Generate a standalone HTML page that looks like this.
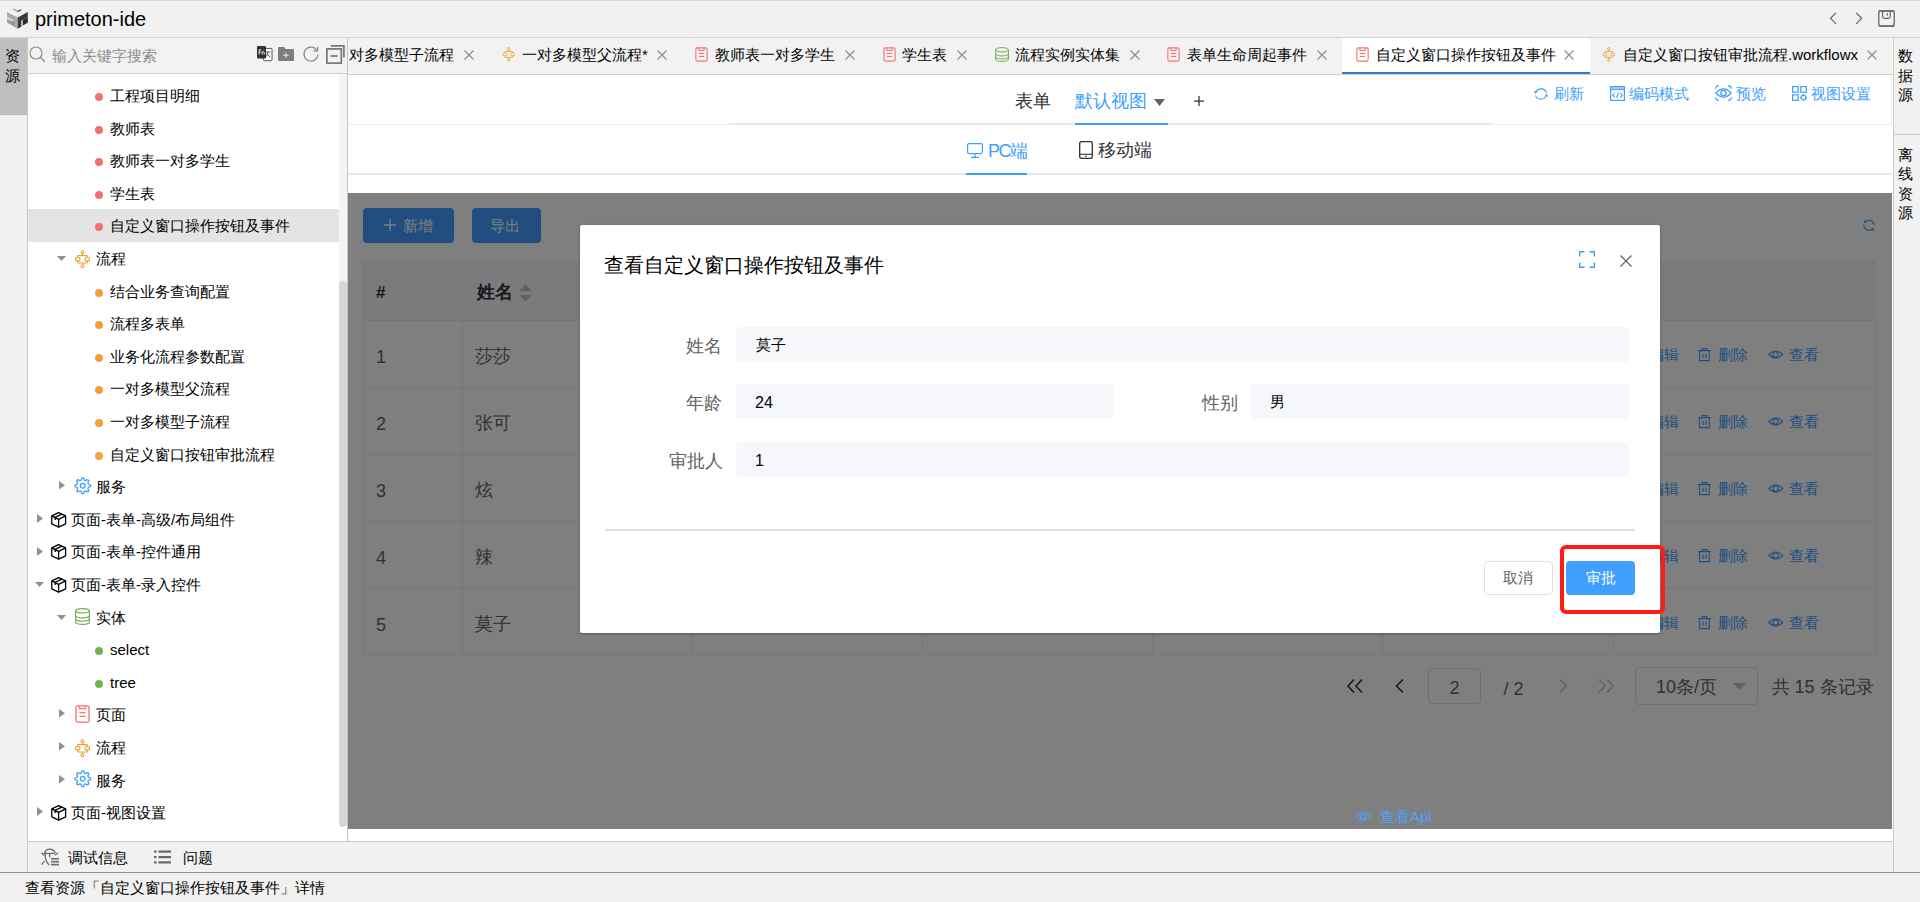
<!DOCTYPE html>
<html><head><meta charset="utf-8">
<style>
*{margin:0;padding:0;box-sizing:border-box}
html,body{width:1920px;height:902px;overflow:hidden;background:#f1f1f1;font-family:"Liberation Sans",sans-serif;color:#000}
.a{position:absolute}
.t{position:absolute;white-space:nowrap;line-height:1}
svg{position:absolute;overflow:visible}
</style></head><body>
<div class="a" style="left:0px;top:0px;width:1920px;height:1px;background:#d8dadc;"></div>
<div class="a" style="left:0px;top:37px;width:1920px;height:1px;background:#d2d2d2;"></div>
<svg style="left:0px;top:0px;" width="32" height="32" viewBox="0 0 32 32"><polygon points="7,12 17.7,17.4 17.7,28.8 13.6,26.5 13.6,20.2 7,17" fill="#a9a9a9"/><polygon points="7,18.6 12.5,21.3 12.5,25.5 7,22.8" fill="#a0a0a0"/><polygon points="12.5,21.3 13.6,20.8 13.6,26 12.5,25.5" fill="#555"/><polygon points="17.7,17.4 27.8,12 27.8,17.5 21.5,20.7 21.5,26.5 17.7,28.8" fill="#3a3a3a"/><polygon points="22.8,20 27.8,17.5 27.8,22.8 22.8,25.4" fill="#2a2a2a"/><polygon points="21.5,20.7 22.8,20 22.8,25.4 21.5,26.2" fill="#bbb"/><polygon points="13.3,8 17.7,10.5 17.7,12.4 13.3,9.9" fill="#b0b0b0"/><polygon points="17.7,10.5 21.4,9 21.4,10.2 17.7,12.4" fill="#555"/></svg>
<div class="t" style="left:35px;top:9px;font-size:20px;color:#000;">primeton-ide</div>
<svg style="left:1829px;top:12px;" width="9" height="13" viewBox="0 0 9 13"><path d="M7 0.8 L1.5 6.3 L7 11.8" fill="none" stroke="#5a5a5a" stroke-width="1.1"/></svg>
<svg style="left:1855px;top:12px;" width="9" height="13" viewBox="0 0 9 13"><path d="M1.2 0.8 L6.7 6.3 L1.2 11.8" fill="none" stroke="#5a5a5a" stroke-width="1.1"/></svg>
<svg style="left:1878px;top:10px;" width="17" height="17" viewBox="0 0 17 17"><rect x="0.8" y="0.8" width="15.4" height="15.4" rx="2.2" fill="none" stroke="#666" stroke-width="1.3"/><rect x="0.6" y="0.3" width="15.8" height="1.4" fill="#666"/><rect x="0.6" y="15.3" width="15.8" height="1.4" fill="#666"/><path d="M4.6 1 V6.6 Q4.6 8.4 6.4 8.4 H10.4 Q12.2 8.4 12.2 6.6 V1" fill="none" stroke="#666" stroke-width="1.2"/><line x1="9.3" y1="3" x2="9.3" y2="5.6" stroke="#555" stroke-width="1"/></svg>
<div class="a" style="left:0px;top:38px;width:27px;height:77px;background:#bfbfbf;"></div>
<div class="a" style="left:0px;top:114px;width:27px;height:1px;background:#b9b9b9;"></div>
<div class="a" style="left:27px;top:38px;width:1px;height:834px;background:#c8c8c8;"></div>
<div class="t" style="left:5px;top:48px;font-size:15px;color:#000;">资</div>
<div class="t" style="left:5px;top:68px;font-size:15px;color:#000;">源</div>
<div class="a" style="left:28px;top:38px;width:319px;height:35px;background:#f2f2f2;"></div>
<div class="a" style="left:28px;top:73px;width:319px;height:1px;background:#d0d0d0;"></div>
<svg style="left:29px;top:46px;" width="17" height="17" viewBox="0 0 17 17"><circle cx="7" cy="7" r="6" fill="none" stroke="#8c8c8c" stroke-width="1.2"/><line x1="11.3" y1="11.3" x2="15.8" y2="15.8" stroke="#8c8c8c" stroke-width="1.3"/></svg>
<div class="t" style="left:52px;top:48px;font-size:15px;color:#8c8c8c;">输入关键字搜索</div>
<svg style="left:257px;top:46px;" width="16" height="16" viewBox="0 0 16 16"><rect x="6.6" y="2.4" width="8.4" height="12.3" rx="0.8" fill="#fff" stroke="#555" stroke-width="1"/><path d="M8.8 6 H13.4 M11 6 L9.5 10.5 M10.6 7.8 L13 11.2" stroke="#444" stroke-width="0.9" fill="none"/><rect x="0" y="0" width="9" height="12.5" rx="1.2" fill="#333"/><path d="M2.2 8.5 V3.8 H4.2 M2.2 6 H3.8 M5.2 8.5 V5.5 M5.2 6.2 Q6.8 4.8 7.2 6.4 V8.5" stroke="#eee" stroke-width="1" fill="none"/></svg>
<svg style="left:278px;top:47px;" width="16" height="14" viewBox="0 0 16 14"><path d="M0 1.2 Q0 0 1.2 0 H6 L7.6 2 H14.8 Q16 2 16 3.2 V12.8 Q16 14 14.8 14 H1.2 Q0 14 0 12.8 Z" fill="#7d7d7d"/><path d="M8 5.5 V11 M5.2 8.2 H10.8" stroke="#e8e8e8" stroke-width="1.1"/></svg>
<svg style="left:303px;top:46px;" width="16" height="16" viewBox="0 0 16 16"><path d="M14.2 4.8 A7 7 0 1 0 15 8.5" fill="none" stroke="#8a8a8a" stroke-width="1.2"/><path d="M10.5 4.8 H14.6 V0.8" fill="none" stroke="#8a8a8a" stroke-width="1.2"/></svg>
<svg style="left:326px;top:45px;" width="19" height="19" viewBox="0 0 19 19"><rect x="0.9" y="3.9" width="14.4" height="14.2" fill="none" stroke="#777" stroke-width="1.7"/><path d="M4.8 0.9 H17.9 V12.5" fill="none" stroke="#777" stroke-width="1.7"/><line x1="4.5" y1="11" x2="11.6" y2="11" stroke="#777" stroke-width="1.7"/></svg>
<div class="a" style="left:28px;top:74px;width:319px;height:767px;background:#fff;"></div>
<div class="a" style="left:339px;top:74px;width:8px;height:212px;background:#f4f4f4;"></div>
<div class="a" style="left:339px;top:281px;width:8px;height:546px;background:#d6d6d6;border-radius:4px"></div>
<div class="a" style="left:28px;top:209px;width:311px;height:33px;background:#e4e4e4;"></div>
<div class="a" style="left:347px;top:38px;width:1px;height:803px;background:#c4c4c4;"></div>
<div class="a" style="left:95px;top:93.0px;width:8px;height:8px;background:#f46f6f;border-radius:50%"></div>
<div class="t" style="left:110px;top:88.0px;font-size:15px;color:#000;">工程项目明细</div>
<div class="a" style="left:95px;top:125.6px;width:8px;height:8px;background:#f46f6f;border-radius:50%"></div>
<div class="t" style="left:110px;top:120.6px;font-size:15px;color:#000;">教师表</div>
<div class="a" style="left:95px;top:158.2px;width:8px;height:8px;background:#f46f6f;border-radius:50%"></div>
<div class="t" style="left:110px;top:153.2px;font-size:15px;color:#000;">教师表一对多学生</div>
<div class="a" style="left:95px;top:190.8px;width:8px;height:8px;background:#f46f6f;border-radius:50%"></div>
<div class="t" style="left:110px;top:185.8px;font-size:15px;color:#000;">学生表</div>
<div class="a" style="left:95px;top:223.4px;width:8px;height:8px;background:#f46f6f;border-radius:50%"></div>
<div class="t" style="left:110px;top:218.4px;font-size:15px;color:#000;">自定义窗口操作按钮及事件</div>
<svg style="left:57px;top:256.0px;" width="9" height="5" viewBox="0 0 9 5"><polygon points="0,0 9,0 4.5,5" fill="#909090"/></svg>
<svg style="left:74px;top:249.5px" width="17.0" height="19.0" viewBox="0 0 17 19"><g fill="none" stroke="#e8a035" stroke-width="1.1"><ellipse cx="8.5" cy="2.2" rx="1.5" ry="1.5"/><line x1="8.5" y1="3.7" x2="8.5" y2="5.6"/><rect x="3.6" y="5.6" width="9.8" height="7.4" rx="0.8"/><line x1="8.5" y1="13" x2="8.5" y2="14.7"/><ellipse cx="8.5" cy="16.2" rx="1.5" ry="1.5"/></g><rect x="1.5" y="7.7" width="4.4" height="3.2" rx="0.6" fill="#fff" stroke="#e8a035" stroke-width="1.1"/><rect x="11.1" y="7.7" width="4.4" height="3.2" rx="0.6" fill="#fff" stroke="#e8a035" stroke-width="1.1"/></svg>
<div class="t" style="left:96px;top:251.0px;font-size:15px;color:#000;">流程</div>
<div class="a" style="left:95px;top:288.6px;width:8px;height:8px;background:#f0a03c;border-radius:50%"></div>
<div class="t" style="left:110px;top:283.6px;font-size:15px;color:#000;">结合业务查询配置</div>
<div class="a" style="left:95px;top:321.2px;width:8px;height:8px;background:#f0a03c;border-radius:50%"></div>
<div class="t" style="left:110px;top:316.2px;font-size:15px;color:#000;">流程多表单</div>
<div class="a" style="left:95px;top:353.8px;width:8px;height:8px;background:#f0a03c;border-radius:50%"></div>
<div class="t" style="left:110px;top:348.8px;font-size:15px;color:#000;">业务化流程参数配置</div>
<div class="a" style="left:95px;top:386.4px;width:8px;height:8px;background:#f0a03c;border-radius:50%"></div>
<div class="t" style="left:110px;top:381.4px;font-size:15px;color:#000;">一对多模型父流程</div>
<div class="a" style="left:95px;top:419.0px;width:8px;height:8px;background:#f0a03c;border-radius:50%"></div>
<div class="t" style="left:110px;top:414.0px;font-size:15px;color:#000;">一对多模型子流程</div>
<div class="a" style="left:95px;top:451.6px;width:8px;height:8px;background:#f0a03c;border-radius:50%"></div>
<div class="t" style="left:110px;top:446.6px;font-size:15px;color:#000;">自定义窗口按钮审批流程</div>
<svg style="left:59px;top:481.2px;" width="6" height="8.5" viewBox="0 0 6 8.5"><polygon points="0,0 6,4.25 0,8.5" fill="#909090"/></svg>
<svg style="left:73.5px;top:477.0px;" width="17.5" height="17.5" viewBox="0 0 17.5 17.5"><path d="M7.98 0.94 L9.52 0.94 L10.44 3.19 L11.49 3.63 L13.73 2.68 L14.82 3.77 L13.87 6.01 L14.31 7.06 L16.56 7.98 L16.56 9.52 L14.31 10.44 L13.87 11.49 L14.82 13.73 L13.73 14.82 L11.49 13.87 L10.44 14.31 L9.52 16.56 L7.98 16.56 L7.06 14.31 L6.01 13.87 L3.77 14.82 L2.68 13.73 L3.63 11.49 L3.19 10.44 L0.94 9.52 L0.94 7.98 L3.19 7.06 L3.63 6.01 L2.68 3.77 L3.77 2.68 L6.01 3.63 L7.06 3.19Z" fill="none" stroke="#409eff" stroke-width="1.3" stroke-linejoin="round"/><circle cx="8.75" cy="8.75" r="2.355" fill="none" stroke="#409eff" stroke-width="1.3"/></svg>
<div class="t" style="left:96px;top:479.2px;font-size:15px;color:#000;">服务</div>
<svg style="left:37px;top:514.0px;" width="6" height="9" viewBox="0 0 6 9"><polygon points="0,0 6,4.5 0,9" fill="#909090"/></svg>
<svg style="left:50.5px;top:511.5px;" width="16" height="16" viewBox="0 0 16 16"><g fill="none" stroke="#000" stroke-width="1.3" stroke-linejoin="round"><path d="M7.6 0.7 L14.6 3.9 L14.6 11.8 L7.6 15.2 L0.8 11.8 L0.8 3.9 Z"/><path d="M0.8 3.9 L7.6 7.3 L14.6 3.9 M7.6 7.3 V15.2"/><path d="M3.9 5.4 L10.9 2.1 M4.2 5.6 V8"/></g></svg>
<div class="t" style="left:71px;top:511.8px;font-size:15px;color:#000;">页面-表单-高级/布局组件</div>
<svg style="left:37px;top:546.6px;" width="6" height="9" viewBox="0 0 6 9"><polygon points="0,0 6,4.5 0,9" fill="#909090"/></svg>
<svg style="left:50.5px;top:544.1px;" width="16" height="16" viewBox="0 0 16 16"><g fill="none" stroke="#000" stroke-width="1.3" stroke-linejoin="round"><path d="M7.6 0.7 L14.6 3.9 L14.6 11.8 L7.6 15.2 L0.8 11.8 L0.8 3.9 Z"/><path d="M0.8 3.9 L7.6 7.3 L14.6 3.9 M7.6 7.3 V15.2"/><path d="M3.9 5.4 L10.9 2.1 M4.2 5.6 V8"/></g></svg>
<div class="t" style="left:71px;top:544.4px;font-size:15px;color:#000;">页面-表单-控件通用</div>
<svg style="left:35px;top:582.0px;" width="9" height="5" viewBox="0 0 9 5"><polygon points="0,0 9,0 4.5,5" fill="#909090"/></svg>
<svg style="left:50.5px;top:576.7px;" width="16" height="16" viewBox="0 0 16 16"><g fill="none" stroke="#000" stroke-width="1.3" stroke-linejoin="round"><path d="M7.6 0.7 L14.6 3.9 L14.6 11.8 L7.6 15.2 L0.8 11.8 L0.8 3.9 Z"/><path d="M0.8 3.9 L7.6 7.3 L14.6 3.9 M7.6 7.3 V15.2"/><path d="M3.9 5.4 L10.9 2.1 M4.2 5.6 V8"/></g></svg>
<div class="t" style="left:71px;top:577.0px;font-size:15px;color:#000;">页面-表单-录入控件</div>
<svg style="left:57px;top:614.6px;" width="9" height="5" viewBox="0 0 9 5"><polygon points="0,0 9,0 4.5,5" fill="#909090"/></svg>
<svg style="left:75px;top:607.6px;" width="15" height="17" viewBox="0 0 15 17"><g fill="none" stroke="#6ab04c" stroke-width="1.1"><ellipse cx="7.5" cy="2.8000000000000003" rx="6.9" ry="2.2"/><path d="M0.5999999999999996 2.8000000000000003 V14.200000000000001 A6.9 2.2 0 0 0 14.4 14.200000000000001 V2.8000000000000003"/><path d="M0.5999999999999996 7.65 A6.9 2.2 0 0 0 14.4 7.65"/><path d="M0.5999999999999996 11.05 A6.9 2.2 0 0 0 14.4 11.05"/></g></svg>
<div class="t" style="left:96px;top:609.6px;font-size:15px;color:#000;">实体</div>
<div class="a" style="left:95px;top:647.2px;width:8px;height:8px;background:#6cb650;border-radius:50%"></div>
<div class="t" style="left:110px;top:642.2px;font-size:15px;color:#000;">select</div>
<div class="a" style="left:95px;top:679.8px;width:8px;height:8px;background:#6cb650;border-radius:50%"></div>
<div class="t" style="left:110px;top:674.8px;font-size:15px;color:#000;">tree</div>
<svg style="left:59px;top:709.4px;" width="6" height="8.5" viewBox="0 0 6 8.5"><polygon points="0,0 6,4.25 0,8.5" fill="#909090"/></svg>
<svg style="left:75px;top:705.4px;" width="15" height="18" viewBox="0 0 15 18"><g fill="none" stroke="#f47373" stroke-width="1.3"><rect x="0.95" y="0.95" width="13.1" height="16.099999999999998" rx="1.6"/><path d="M4.5 0.95 v2.6 h6.0 v-2.6"/><line x1="4.5" y1="7.74" x2="10.5" y2="7.74"/><line x1="4.5" y1="11.34" x2="10.5" y2="11.34"/></g></svg>
<div class="t" style="left:96px;top:707.4px;font-size:15px;color:#000;">页面</div>
<svg style="left:59px;top:742.0px;" width="6" height="8.5" viewBox="0 0 6 8.5"><polygon points="0,0 6,4.25 0,8.5" fill="#909090"/></svg>
<svg style="left:74px;top:738.5px" width="17.0" height="19.0" viewBox="0 0 17 19"><g fill="none" stroke="#e8a035" stroke-width="1.1"><ellipse cx="8.5" cy="2.2" rx="1.5" ry="1.5"/><line x1="8.5" y1="3.7" x2="8.5" y2="5.6"/><rect x="3.6" y="5.6" width="9.8" height="7.4" rx="0.8"/><line x1="8.5" y1="13" x2="8.5" y2="14.7"/><ellipse cx="8.5" cy="16.2" rx="1.5" ry="1.5"/></g><rect x="1.5" y="7.7" width="4.4" height="3.2" rx="0.6" fill="#fff" stroke="#e8a035" stroke-width="1.1"/><rect x="11.1" y="7.7" width="4.4" height="3.2" rx="0.6" fill="#fff" stroke="#e8a035" stroke-width="1.1"/></svg>
<div class="t" style="left:96px;top:740.0px;font-size:15px;color:#000;">流程</div>
<svg style="left:59px;top:774.6px;" width="6" height="8.5" viewBox="0 0 6 8.5"><polygon points="0,0 6,4.25 0,8.5" fill="#909090"/></svg>
<svg style="left:73.5px;top:770.4px;" width="17.5" height="17.5" viewBox="0 0 17.5 17.5"><path d="M7.98 0.94 L9.52 0.94 L10.44 3.19 L11.49 3.63 L13.73 2.68 L14.82 3.77 L13.87 6.01 L14.31 7.06 L16.56 7.98 L16.56 9.52 L14.31 10.44 L13.87 11.49 L14.82 13.73 L13.73 14.82 L11.49 13.87 L10.44 14.31 L9.52 16.56 L7.98 16.56 L7.06 14.31 L6.01 13.87 L3.77 14.82 L2.68 13.73 L3.63 11.49 L3.19 10.44 L0.94 9.52 L0.94 7.98 L3.19 7.06 L3.63 6.01 L2.68 3.77 L3.77 2.68 L6.01 3.63 L7.06 3.19Z" fill="none" stroke="#409eff" stroke-width="1.3" stroke-linejoin="round"/><circle cx="8.75" cy="8.75" r="2.355" fill="none" stroke="#409eff" stroke-width="1.3"/></svg>
<div class="t" style="left:96px;top:772.6px;font-size:15px;color:#000;">服务</div>
<svg style="left:37px;top:807.4000000000001px;" width="6" height="9" viewBox="0 0 6 9"><polygon points="0,0 6,4.5 0,9" fill="#909090"/></svg>
<svg style="left:50.5px;top:804.9000000000001px;" width="16" height="16" viewBox="0 0 16 16"><g fill="none" stroke="#000" stroke-width="1.3" stroke-linejoin="round"><path d="M7.6 0.7 L14.6 3.9 L14.6 11.8 L7.6 15.2 L0.8 11.8 L0.8 3.9 Z"/><path d="M0.8 3.9 L7.6 7.3 L14.6 3.9 M7.6 7.3 V15.2"/><path d="M3.9 5.4 L10.9 2.1 M4.2 5.6 V8"/></g></svg>
<div class="t" style="left:71px;top:805.2px;font-size:15px;color:#000;">页面-视图设置</div>
<div class="a" style="left:28px;top:841px;width:1865px;height:1px;background:#c8c8c8;"></div>
<svg style="left:40px;top:848px;" width="20" height="19" viewBox="0 0 20 19"><g fill="none" stroke="#666" stroke-width="1.2"><path d="M4.2 6 Q5.5 1.2 9.6 1.2 Q13.6 1.2 15.5 5.2"/><path d="M4.4 5.4 H14.8"/><path d="M5.4 5.6 Q4.2 11.5 9.2 17.2"/><path d="M9.6 5.5 V9.3"/><path d="M1.5 4.8 L4.4 7.6 M1.5 16.6 L4.5 13.2 M17.8 4.6 L15.2 7.4"/></g><rect x="11" y="10" width="8" height="1.6" fill="#6a6a6a"/><rect x="11" y="12.9" width="8" height="1.6" fill="#6a6a6a"/><rect x="11" y="15.8" width="8" height="1.6" fill="#6a6a6a"/></svg>
<div class="t" style="left:67.5px;top:850px;font-size:15px;color:#000;">调试信息</div>
<svg style="left:154px;top:850px;" width="17" height="14" viewBox="0 0 17 14"><rect x="0" y="0.5" width="2.5" height="2.2" fill="#666"/><rect x="4.5" y="0.5" width="12.5" height="2.2" fill="#666"/><rect x="0" y="6" width="2.5" height="2.2" fill="#666"/><rect x="4.5" y="6" width="12.5" height="2.2" fill="#666"/><rect x="0" y="11.3" width="2.5" height="2.2" fill="#666"/><rect x="4.5" y="11.3" width="12.5" height="2.2" fill="#666"/></svg>
<div class="t" style="left:182.5px;top:850px;font-size:15px;color:#000;">问题</div>
<div class="a" style="left:0px;top:871.5px;width:1920px;height:1.5px;background:#8f8f8f;"></div>
<div class="t" style="left:25px;top:880px;font-size:15px;color:#000;">查看资源「自定义窗口操作按钮及事件」详情</div>
<div class="a" style="left:1893px;top:38px;width:1px;height:834px;background:#cdcdcd;"></div>
<div class="a" style="left:1894px;top:134px;width:26px;height:1px;background:#cdcdcd;"></div>
<div class="t" style="left:1898px;top:48.0px;font-size:15px;color:#000;">数</div>
<div class="t" style="left:1898px;top:67.55px;font-size:15px;color:#000;">据</div>
<div class="t" style="left:1898px;top:87.1px;font-size:15px;color:#000;">源</div>
<div class="t" style="left:1898px;top:146.5px;font-size:15px;color:#000;">离</div>
<div class="t" style="left:1898px;top:166.1px;font-size:15px;color:#000;">线</div>
<div class="t" style="left:1898px;top:185.7px;font-size:15px;color:#000;">资</div>
<div class="t" style="left:1898px;top:205.3px;font-size:15px;color:#000;">源</div>
<div class="a" style="left:348px;top:38px;width:1545px;height:36px;background:#f2f2f2;"></div>
<div class="a" style="left:348px;top:74px;width:1545px;height:1px;background:#cfcfcf;"></div>
<div class="a" style="left:1342px;top:38px;width:248px;height:34px;background:#fff;"></div>
<div class="a" style="left:1342px;top:72px;width:248px;height:2px;background:#3478c6;"></div>
<div class="a" style="left:348px;top:38px;width:1544px;height:36px;overflow:hidden">
<div class="t" style="left:-14px;top:9px;font-size:15px;color:#000;">一对多模型子流程</div>
<svg style="left:116px;top:12px;" width="10" height="10" viewBox="0 0 10 10"><path d="M0.5 0.5 L9.5 9.5 M9.5 0.5 L0.5 9.5" stroke="#8a8a8a" stroke-width="1.1"/></svg>
<svg style="left:153.5px;top:9px" width="13.600000000000001" height="15.200000000000001" viewBox="0 0 17 19"><g fill="none" stroke="#e8a035" stroke-width="1.1"><ellipse cx="8.5" cy="2.2" rx="1.5" ry="1.5"/><line x1="8.5" y1="3.7" x2="8.5" y2="5.6"/><rect x="3.6" y="5.6" width="9.8" height="7.4" rx="0.8"/><line x1="8.5" y1="13" x2="8.5" y2="14.7"/><ellipse cx="8.5" cy="16.2" rx="1.5" ry="1.5"/></g><rect x="1.5" y="7.7" width="4.4" height="3.2" rx="0.6" fill="#fff" stroke="#e8a035" stroke-width="1.1"/><rect x="11.1" y="7.7" width="4.4" height="3.2" rx="0.6" fill="#fff" stroke="#e8a035" stroke-width="1.1"/></svg>
<div class="t" style="left:174px;top:9px;font-size:15px;color:#000;">一对多模型父流程*</div>
<svg style="left:309px;top:12px;" width="10" height="10" viewBox="0 0 10 10"><path d="M0.5 0.5 L9.5 9.5 M9.5 0.5 L0.5 9.5" stroke="#8a8a8a" stroke-width="1.1"/></svg>
<svg style="left:347px;top:9px;" width="13" height="15" viewBox="0 0 13 15"><g fill="none" stroke="#f47373" stroke-width="1.1"><rect x="0.8500000000000001" y="0.8500000000000001" width="11.3" height="13.3" rx="1.6"/><path d="M3.9 0.8500000000000001 v2.6 h5.2 v-2.6"/><line x1="3.9" y1="6.45" x2="9.1" y2="6.45"/><line x1="3.9" y1="9.45" x2="9.1" y2="9.45"/></g></svg>
<div class="t" style="left:367px;top:9px;font-size:15px;color:#000;">教师表一对多学生</div>
<svg style="left:497px;top:12px;" width="10" height="10" viewBox="0 0 10 10"><path d="M0.5 0.5 L9.5 9.5 M9.5 0.5 L0.5 9.5" stroke="#8a8a8a" stroke-width="1.1"/></svg>
<svg style="left:535px;top:9px;" width="13" height="15" viewBox="0 0 13 15"><g fill="none" stroke="#f47373" stroke-width="1.1"><rect x="0.8500000000000001" y="0.8500000000000001" width="11.3" height="13.3" rx="1.6"/><path d="M3.9 0.8500000000000001 v2.6 h5.2 v-2.6"/><line x1="3.9" y1="6.45" x2="9.1" y2="6.45"/><line x1="3.9" y1="9.45" x2="9.1" y2="9.45"/></g></svg>
<div class="t" style="left:554px;top:9px;font-size:15px;color:#000;">学生表</div>
<svg style="left:609px;top:12px;" width="10" height="10" viewBox="0 0 10 10"><path d="M0.5 0.5 L9.5 9.5 M9.5 0.5 L0.5 9.5" stroke="#8a8a8a" stroke-width="1.1"/></svg>
<svg style="left:647px;top:9px;" width="14" height="15" viewBox="0 0 14 15"><g fill="none" stroke="#6ab04c" stroke-width="1.0"><ellipse cx="7.0" cy="2.8000000000000003" rx="6.4" ry="2.2"/><path d="M0.5999999999999996 2.8000000000000003 V12.200000000000001 A6.4 2.2 0 0 0 13.4 12.200000000000001 V2.8000000000000003"/><path d="M0.5999999999999996 6.75 A6.4 2.2 0 0 0 13.4 6.75"/><path d="M0.5999999999999996 9.75 A6.4 2.2 0 0 0 13.4 9.75"/></g></svg>
<div class="t" style="left:667px;top:9px;font-size:15px;color:#000;">流程实例实体集</div>
<svg style="left:782px;top:12px;" width="10" height="10" viewBox="0 0 10 10"><path d="M0.5 0.5 L9.5 9.5 M9.5 0.5 L0.5 9.5" stroke="#8a8a8a" stroke-width="1.1"/></svg>
<svg style="left:819px;top:9px;" width="13" height="15" viewBox="0 0 13 15"><g fill="none" stroke="#f47373" stroke-width="1.1"><rect x="0.8500000000000001" y="0.8500000000000001" width="11.3" height="13.3" rx="1.6"/><path d="M3.9 0.8500000000000001 v2.6 h5.2 v-2.6"/><line x1="3.9" y1="6.45" x2="9.1" y2="6.45"/><line x1="3.9" y1="9.45" x2="9.1" y2="9.45"/></g></svg>
<div class="t" style="left:839px;top:9px;font-size:15px;color:#000;">表单生命周起事件</div>
<svg style="left:969px;top:12px;" width="10" height="10" viewBox="0 0 10 10"><path d="M0.5 0.5 L9.5 9.5 M9.5 0.5 L0.5 9.5" stroke="#8a8a8a" stroke-width="1.1"/></svg>
<svg style="left:1008px;top:9px;" width="13" height="15" viewBox="0 0 13 15"><g fill="none" stroke="#f47373" stroke-width="1.1"><rect x="0.8500000000000001" y="0.8500000000000001" width="11.3" height="13.3" rx="1.6"/><path d="M3.9 0.8500000000000001 v2.6 h5.2 v-2.6"/><line x1="3.9" y1="6.45" x2="9.1" y2="6.45"/><line x1="3.9" y1="9.45" x2="9.1" y2="9.45"/></g></svg>
<div class="t" style="left:1028px;top:9px;font-size:15px;color:#000;">自定义窗口操作按钮及事件</div>
<svg style="left:1216px;top:12px;" width="10" height="10" viewBox="0 0 10 10"><path d="M0.5 0.5 L9.5 9.5 M9.5 0.5 L0.5 9.5" stroke="#8a8a8a" stroke-width="1.1"/></svg>
<svg style="left:1254px;top:9px" width="13.600000000000001" height="15.200000000000001" viewBox="0 0 17 19"><g fill="none" stroke="#e8a035" stroke-width="1.1"><ellipse cx="8.5" cy="2.2" rx="1.5" ry="1.5"/><line x1="8.5" y1="3.7" x2="8.5" y2="5.6"/><rect x="3.6" y="5.6" width="9.8" height="7.4" rx="0.8"/><line x1="8.5" y1="13" x2="8.5" y2="14.7"/><ellipse cx="8.5" cy="16.2" rx="1.5" ry="1.5"/></g><rect x="1.5" y="7.7" width="4.4" height="3.2" rx="0.6" fill="#fff" stroke="#e8a035" stroke-width="1.1"/><rect x="11.1" y="7.7" width="4.4" height="3.2" rx="0.6" fill="#fff" stroke="#e8a035" stroke-width="1.1"/></svg>
<div class="t" style="left:1275px;top:9px;font-size:15px;color:#000;">自定义窗口按钮审批流程.workflowx</div>
<svg style="left:1519px;top:12px;" width="10" height="10" viewBox="0 0 10 10"><path d="M0.5 0.5 L9.5 9.5 M9.5 0.5 L0.5 9.5" stroke="#8a8a8a" stroke-width="1.1"/></svg>
</div>
<div class="a" style="left:348px;top:75px;width:1545px;height:766px;background:#fff;"></div>
<div class="a" style="left:348px;top:124px;width:1543px;height:1px;background:#f3eaea;"></div>
<div class="a" style="left:1891px;top:75px;width:1px;height:50px;background:#f3eaea;"></div>
<div class="a" style="left:729px;top:123px;width:762px;height:2px;background:#e4e7ed;"></div>
<div class="a" style="left:1075px;top:123px;width:93px;height:2px;background:#409eff;"></div>
<div class="t" style="left:1015px;top:92px;font-size:18px;color:#303133;">表单</div>
<div class="t" style="left:1075px;top:92px;font-size:18px;color:#409eff;">默认视图</div>
<svg style="left:1154px;top:99px;" width="11" height="7" viewBox="0 0 11 7"><polygon points="0,0 11,0 5.5,7" fill="#606266"/></svg>
<svg style="left:1194px;top:96px;" width="10" height="10" viewBox="0 0 10 10"><path d="M5 0 V10 M0 5 H10" stroke="#303133" stroke-width="1.25"/></svg>
<svg style="left:1534px;top:87px;" width="14" height="14" viewBox="0 0 14 14"><path d="M1.8 5.2 A5.9 5.9 0 0 1 12.6 5.6" fill="none" stroke="#409eff" stroke-width="1.1"/><path d="M12.3 8.6 A5.9 5.9 0 0 1 1.5 8.6 " fill="none" stroke="#409eff" stroke-width="1.1"/><polygon points="0,4 3.6,4.2 1.4,7" fill="#409eff"/><polygon points="14,9.5 10.6,9.2 12.8,6.5" fill="#409eff"/></svg>
<div class="t" style="left:1554px;top:86px;font-size:15px;color:#409eff;">刷新</div>
<svg style="left:1610px;top:86px;" width="15" height="15" viewBox="0 0 15 15"><rect x="0.6" y="0.6" width="13.8" height="13.8" fill="none" stroke="#409eff" stroke-width="1.2"/><rect x="1.2" y="1.2" width="12.6" height="2.2" fill="#409eff" opacity="0.55"/><line x1="0.6" y1="3.6" x2="14.4" y2="3.6" stroke="#409eff" stroke-width="1"/><path d="M4.6 7 L2.6 9.2 L4.6 11.4 M10.4 7 L12.4 9.2 L10.4 11.4 M8.3 6.4 L6.7 12" fill="none" stroke="#409eff" stroke-width="1.1"/></svg>
<div class="t" style="left:1629px;top:86px;font-size:15px;color:#409eff;">编码模式</div>
<svg style="left:1715px;top:85px;" width="17" height="16" viewBox="0 0 17 16"><path d="M0.9 8 Q8.5 -0.2 16.1 8 Q8.5 16.2 0.9 8 Z" fill="none" stroke="#409eff" stroke-width="1.2"/><circle cx="8.5" cy="8" r="2.7" fill="none" stroke="#409eff" stroke-width="1.3"/><path d="M0.7 3.8 Q0.7 0.7 3.8 0.7 M13.2 0.7 Q16.3 0.7 16.3 3.8 M16.3 12.2 Q16.3 15.3 13.2 15.3 M3.8 15.3 Q0.7 15.3 0.7 12.2" fill="none" stroke="#409eff" stroke-width="1.2"/></svg>
<div class="t" style="left:1736px;top:86px;font-size:15px;color:#409eff;">预览</div>
<svg style="left:1792px;top:86px;" width="15" height="15" viewBox="0 0 15 15"><g fill="none" stroke="#409eff" stroke-width="1.2"><rect x="0.6" y="0.6" width="5.6" height="5.6"/><rect x="8.8" y="0.6" width="5.6" height="5.6"/><rect x="0.6" y="8.8" width="5.6" height="5.6"/><circle cx="11.6" cy="11.6" r="2.4"/></g><g stroke="#409eff" stroke-width="1.1"><line x1="11.6" y1="8.2" x2="11.6" y2="9.2"/><line x1="11.6" y1="14" x2="11.6" y2="15"/><line x1="8.2" y1="11.6" x2="9.2" y2="11.6"/><line x1="14" y1="11.6" x2="15" y2="11.6"/></g></svg>
<div class="t" style="left:1811px;top:86px;font-size:15px;color:#409eff;">视图设置</div>
<div class="a" style="left:348px;top:173px;width:1544px;height:2px;background:#e4e7ed;"></div>
<div class="a" style="left:966px;top:173px;width:61px;height:2px;background:#409eff;"></div>
<svg style="left:967px;top:143px;" width="16" height="15" viewBox="0 0 16 15"><rect x="0.6" y="0.6" width="14.8" height="10" rx="1.5" fill="none" stroke="#409eff" stroke-width="1.2"/><path d="M8 10.6 V14 M4 14.3 H12" stroke="#409eff" stroke-width="1.2"/></svg>
<div class="t" style="left:988px;top:142px;font-size:18px;color:#409eff;"><span style="letter-spacing:-1.5px">PC</span>端</div>
<svg style="left:1079px;top:141px;" width="14" height="18" viewBox="0 0 14 18"><rect x="0.7" y="0.7" width="12.6" height="16.6" rx="1.6" fill="none" stroke="#303133" stroke-width="1.3"/><line x1="0.7" y1="13.3" x2="13.3" y2="13.3" stroke="#303133" stroke-width="1.1"/><circle cx="7" cy="15.4" r="0.8" fill="#303133"/></svg>
<div class="t" style="left:1098px;top:141px;font-size:18px;color:#303133;">移动端</div>
<div class="a" style="left:348px;top:193px;width:1544px;height:636px;background:#fff;"></div>
<div class="a" style="left:363px;top:208px;width:91px;height:35px;background:#409eff;border-radius:4px"></div>
<svg style="left:384px;top:219px;" width="12" height="12" viewBox="0 0 12 12"><path d="M6 0 V12 M0 6 H12" stroke="#fff" stroke-width="1.3"/></svg>
<div class="t" style="left:403px;top:218px;font-size:15px;color:#fff;">新增</div>
<div class="a" style="left:472px;top:208px;width:69px;height:35px;background:#409eff;border-radius:4px"></div>
<div class="t" style="left:490px;top:218px;font-size:15px;color:#fff;">导出</div>
<svg style="left:1863px;top:219px;" width="12" height="13" viewBox="0 0 12 13"><path d="M3 2.2 Q5 1.2 7 1.4 Q10.5 2 10.8 6" fill="none" stroke="#409eff" stroke-width="1.2"/><path d="M0.7 5.8 Q0.9 10.5 5.5 11.3 Q7.5 11.5 9 10.5" fill="none" stroke="#409eff" stroke-width="1.2"/><polygon points="0.8,1 4.5,2.5 1.5,4.5" fill="#409eff"/><polygon points="11,12 7.5,10.3 10.5,8.5" fill="#409eff"/></svg>
<div class="a" style="left:363px;top:261px;width:1513px;height:59px;background:#f5f7fa;"></div>
<div class="a" style="left:363px;top:261px;width:1513px;height:1px;background:#ebeef5;"></div>
<div class="a" style="left:363px;top:320px;width:1513px;height:1px;background:#ebeef5;"></div>
<div class="a" style="left:363px;top:387px;width:1513px;height:1px;background:#ebeef5;"></div>
<div class="a" style="left:363px;top:454px;width:1513px;height:1px;background:#ebeef5;"></div>
<div class="a" style="left:363px;top:521px;width:1513px;height:1px;background:#ebeef5;"></div>
<div class="a" style="left:363px;top:588px;width:1513px;height:1px;background:#ebeef5;"></div>
<div class="a" style="left:363px;top:654px;width:1513px;height:1px;background:#ebeef5;"></div>
<div class="a" style="left:363px;top:261px;width:1px;height:394px;background:#ebeef5;"></div>
<div class="a" style="left:462px;top:261px;width:1px;height:394px;background:#ebeef5;"></div>
<div class="a" style="left:692px;top:261px;width:1px;height:394px;background:#ebeef5;"></div>
<div class="a" style="left:922px;top:261px;width:1px;height:394px;background:#ebeef5;"></div>
<div class="a" style="left:1152px;top:261px;width:1px;height:394px;background:#ebeef5;"></div>
<div class="a" style="left:1382px;top:261px;width:1px;height:394px;background:#ebeef5;"></div>
<div class="a" style="left:1613px;top:261px;width:1px;height:394px;background:#ebeef5;"></div>
<div class="a" style="left:1875px;top:261px;width:1px;height:394px;background:#ebeef5;"></div>
<div class="t" style="left:376px;top:284px;font-size:17px;color:#303133;font-weight:bold">#</div>
<div class="t" style="left:477px;top:283px;font-size:18px;color:#303133;font-weight:bold">姓名</div>
<svg style="left:519px;top:284px;" width="13" height="19" viewBox="0 0 13 19"><polygon points="6.5,0 13,7 0,7" fill="#c0c4cc"/><polygon points="0,11 13,11 6.5,18" fill="#c0c4cc"/></svg>
<div class="t" style="left:376px;top:348px;font-size:18px;color:#606266;">1</div>
<div class="t" style="left:475px;top:347px;font-size:18px;color:#606266;">莎莎</div>
<div class="t" style="left:1648.5px;top:347px;font-size:15px;color:#409eff;">编辑</div>
<svg style="left:1698px;top:347.5px;" width="13" height="14" viewBox="0 0 13 14"><path d="M0.3 2.6 H12.7 M4 2.6 V0.6 H9 V2.6 M1.6 2.6 V12.6 H11.3 V2.6 M5 5.5 V10 M8 5.5 V10" fill="none" stroke="#409eff" stroke-width="1.1"/></svg>
<div class="t" style="left:1718px;top:347px;font-size:15px;color:#409eff;">删除</div>
<svg style="left:1767.5px;top:348.5px;" width="16" height="11" viewBox="0 0 16 11"><path d="M0.8 5.5 Q7.5 -1.5 14.7 5.5 Q7.5 12.5 0.8 5.5 Z" fill="none" stroke="#409eff" stroke-width="1.1"/><circle cx="7.6" cy="5.5" r="2.6" fill="none" stroke="#409eff" stroke-width="1.1"/></svg>
<div class="t" style="left:1788.5px;top:347px;font-size:15px;color:#409eff;">查看</div>
<div class="t" style="left:376px;top:415px;font-size:18px;color:#606266;">2</div>
<div class="t" style="left:475px;top:414px;font-size:18px;color:#606266;">张可</div>
<div class="t" style="left:1648.5px;top:414px;font-size:15px;color:#409eff;">编辑</div>
<svg style="left:1698px;top:414.5px;" width="13" height="14" viewBox="0 0 13 14"><path d="M0.3 2.6 H12.7 M4 2.6 V0.6 H9 V2.6 M1.6 2.6 V12.6 H11.3 V2.6 M5 5.5 V10 M8 5.5 V10" fill="none" stroke="#409eff" stroke-width="1.1"/></svg>
<div class="t" style="left:1718px;top:414px;font-size:15px;color:#409eff;">删除</div>
<svg style="left:1767.5px;top:415.5px;" width="16" height="11" viewBox="0 0 16 11"><path d="M0.8 5.5 Q7.5 -1.5 14.7 5.5 Q7.5 12.5 0.8 5.5 Z" fill="none" stroke="#409eff" stroke-width="1.1"/><circle cx="7.6" cy="5.5" r="2.6" fill="none" stroke="#409eff" stroke-width="1.1"/></svg>
<div class="t" style="left:1788.5px;top:414px;font-size:15px;color:#409eff;">查看</div>
<div class="t" style="left:376px;top:482px;font-size:18px;color:#606266;">3</div>
<div class="t" style="left:475px;top:481px;font-size:18px;color:#606266;">炫</div>
<div class="t" style="left:1648.5px;top:481px;font-size:15px;color:#409eff;">编辑</div>
<svg style="left:1698px;top:481.5px;" width="13" height="14" viewBox="0 0 13 14"><path d="M0.3 2.6 H12.7 M4 2.6 V0.6 H9 V2.6 M1.6 2.6 V12.6 H11.3 V2.6 M5 5.5 V10 M8 5.5 V10" fill="none" stroke="#409eff" stroke-width="1.1"/></svg>
<div class="t" style="left:1718px;top:481px;font-size:15px;color:#409eff;">删除</div>
<svg style="left:1767.5px;top:482.5px;" width="16" height="11" viewBox="0 0 16 11"><path d="M0.8 5.5 Q7.5 -1.5 14.7 5.5 Q7.5 12.5 0.8 5.5 Z" fill="none" stroke="#409eff" stroke-width="1.1"/><circle cx="7.6" cy="5.5" r="2.6" fill="none" stroke="#409eff" stroke-width="1.1"/></svg>
<div class="t" style="left:1788.5px;top:481px;font-size:15px;color:#409eff;">查看</div>
<div class="t" style="left:376px;top:549px;font-size:18px;color:#606266;">4</div>
<div class="t" style="left:475px;top:548px;font-size:18px;color:#606266;">辣</div>
<div class="t" style="left:1648.5px;top:548px;font-size:15px;color:#409eff;">编辑</div>
<svg style="left:1698px;top:548.5px;" width="13" height="14" viewBox="0 0 13 14"><path d="M0.3 2.6 H12.7 M4 2.6 V0.6 H9 V2.6 M1.6 2.6 V12.6 H11.3 V2.6 M5 5.5 V10 M8 5.5 V10" fill="none" stroke="#409eff" stroke-width="1.1"/></svg>
<div class="t" style="left:1718px;top:548px;font-size:15px;color:#409eff;">删除</div>
<svg style="left:1767.5px;top:549.5px;" width="16" height="11" viewBox="0 0 16 11"><path d="M0.8 5.5 Q7.5 -1.5 14.7 5.5 Q7.5 12.5 0.8 5.5 Z" fill="none" stroke="#409eff" stroke-width="1.1"/><circle cx="7.6" cy="5.5" r="2.6" fill="none" stroke="#409eff" stroke-width="1.1"/></svg>
<div class="t" style="left:1788.5px;top:548px;font-size:15px;color:#409eff;">查看</div>
<div class="t" style="left:376px;top:616px;font-size:18px;color:#606266;">5</div>
<div class="t" style="left:475px;top:615px;font-size:18px;color:#606266;">莫子</div>
<div class="t" style="left:1648.5px;top:615px;font-size:15px;color:#409eff;">编辑</div>
<svg style="left:1698px;top:615.5px;" width="13" height="14" viewBox="0 0 13 14"><path d="M0.3 2.6 H12.7 M4 2.6 V0.6 H9 V2.6 M1.6 2.6 V12.6 H11.3 V2.6 M5 5.5 V10 M8 5.5 V10" fill="none" stroke="#409eff" stroke-width="1.1"/></svg>
<div class="t" style="left:1718px;top:615px;font-size:15px;color:#409eff;">删除</div>
<svg style="left:1767.5px;top:616.5px;" width="16" height="11" viewBox="0 0 16 11"><path d="M0.8 5.5 Q7.5 -1.5 14.7 5.5 Q7.5 12.5 0.8 5.5 Z" fill="none" stroke="#409eff" stroke-width="1.1"/><circle cx="7.6" cy="5.5" r="2.6" fill="none" stroke="#409eff" stroke-width="1.1"/></svg>
<div class="t" style="left:1788.5px;top:615px;font-size:15px;color:#409eff;">查看</div>
<svg style="left:1347px;top:679px;" width="16" height="14" viewBox="0 0 16 14"><path d="M7 0.5 L1 7 L7 13.5 M15 0.5 L9 7 L15 13.5" fill="none" stroke="#303133" stroke-width="1.6"/></svg>
<svg style="left:1395px;top:679px;" width="9" height="14" viewBox="0 0 9 14"><path d="M8 0.5 L1.5 7 L8 13.5" fill="none" stroke="#303133" stroke-width="1.6"/></svg>
<div class="a" style="left:1428px;top:668px;width:53px;height:36px;background:#fff;border:1px solid #dcdfe6;border-radius:4px"></div>
<div class="t" style="left:1449.5px;top:679px;font-size:18px;color:#606266;">2</div>
<div class="t" style="left:1503.5px;top:680px;font-size:18px;color:#606266;">/ 2</div>
<svg style="left:1559px;top:679px;" width="9" height="14" viewBox="0 0 9 14"><path d="M1 0.5 L7.5 7 L1 13.5" fill="none" stroke="#c0c4cc" stroke-width="1.6"/></svg>
<svg style="left:1598px;top:679px;" width="16" height="14" viewBox="0 0 16 14"><path d="M1 0.5 L7 7 L1 13.5 M9 0.5 L15 7 L9 13.5" fill="none" stroke="#c0c4cc" stroke-width="1.6"/></svg>
<div class="a" style="left:1635px;top:667px;width:123px;height:38px;background:#fff;border:1px solid #dcdfe6;border-radius:4px"></div>
<div class="t" style="left:1656px;top:678px;font-size:18px;color:#606266;">10条/页</div>
<svg style="left:1733px;top:683px;" width="13" height="7" viewBox="0 0 13 7"><polygon points="0,0 13,0 6.5,7" fill="#c0c4cc"/></svg>
<div class="t" style="left:1771.5px;top:678px;font-size:18px;color:#606266;">共 15 条记录</div>
<div class="a" style="left:348px;top:193px;width:1544px;height:636px;background:rgba(0,0,0,0.5);"></div>
<svg style="left:1355px;top:811px;" width="16" height="11" viewBox="0 0 16 11"><path d="M0.8 5.5 Q8 -2.5 15.2 5.5 Q8 13.5 0.8 5.5 Z" fill="none" stroke="#4ca2ff" stroke-width="1.1"/><circle cx="8" cy="5.5" r="2.6" fill="none" stroke="#4ca2ff" stroke-width="1.3"/></svg>
<div class="t" style="left:1380px;top:809px;font-size:15px;color:#4ca2ff;">查看Api</div>
<div class="a" style="left:580px;top:225px;width:1080px;height:408px;background:#fff;border-radius:2px;box-shadow:0 1px 3px rgba(0,0,0,0.3)"></div>
<div class="t" style="left:604px;top:255px;font-size:20px;color:#000;">查看自定义窗口操作按钮及事件</div>
<svg style="left:1579px;top:251px;" width="16" height="17" viewBox="0 0 16 17"><path d="M0.7 5.5 V0.7 H5.5 M10.5 0.7 H15.3 V5.5 M15.3 11.5 V16.3 H10.5 M5.5 16.3 H0.7 V11.5" fill="none" stroke="#409eff" stroke-width="1.4"/></svg>
<svg style="left:1619.5px;top:254.5px;" width="12" height="12" viewBox="0 0 12 12"><path d="M0.5 0.5 L11.5 11.5 M11.5 0.5 L0.5 11.5" stroke="#5c5e63" stroke-width="1.1"/></svg>
<div class="a" style="left:736px;top:327px;width:893px;height:35px;background:#f5f7fa;border-radius:4px"></div>
<div class="a" style="left:736px;top:384px;width:378px;height:35px;background:#f5f7fa;border-radius:4px"></div>
<div class="a" style="left:1251px;top:384px;width:378px;height:35px;background:#f5f7fa;border-radius:4px"></div>
<div class="a" style="left:736px;top:442px;width:893px;height:35px;background:#f5f7fa;border-radius:4px"></div>
<div class="t" style="left:685.5px;top:337px;font-size:18px;color:#606266;">姓名</div>
<div class="t" style="left:756px;top:337px;font-size:15px;color:#000;">莫子</div>
<div class="t" style="left:685.5px;top:394px;font-size:18px;color:#606266;">年龄</div>
<div class="t" style="left:755px;top:395px;font-size:16px;color:#000;">24</div>
<div class="t" style="left:1202px;top:394px;font-size:18px;color:#606266;">性别</div>
<div class="t" style="left:1270px;top:394px;font-size:15px;color:#000;">男</div>
<div class="t" style="left:668.5px;top:452px;font-size:18px;color:#606266;">审批人</div>
<div class="t" style="left:755px;top:453px;font-size:16px;color:#000;">1</div>
<div class="a" style="left:605px;top:529px;width:1030px;height:2px;background:#dcdfe6;"></div>
<div class="a" style="left:1484px;top:561px;width:69px;height:34px;background:#fff;border:1px solid #dcdfe6;border-radius:4px"></div>
<div class="t" style="left:1503px;top:570px;font-size:15px;color:#606266;">取消</div>
<div class="a" style="left:1566px;top:561px;width:69px;height:34px;background:#409eff;border-radius:4px"></div>
<div class="t" style="left:1586px;top:570px;font-size:15px;color:#fff;">审批</div>
<div class="a" style="left:1560px;top:545px;width:105px;height:69px;background:transparent;border:4px solid #ff1c14;border-radius:6px"></div>
</body></html>
